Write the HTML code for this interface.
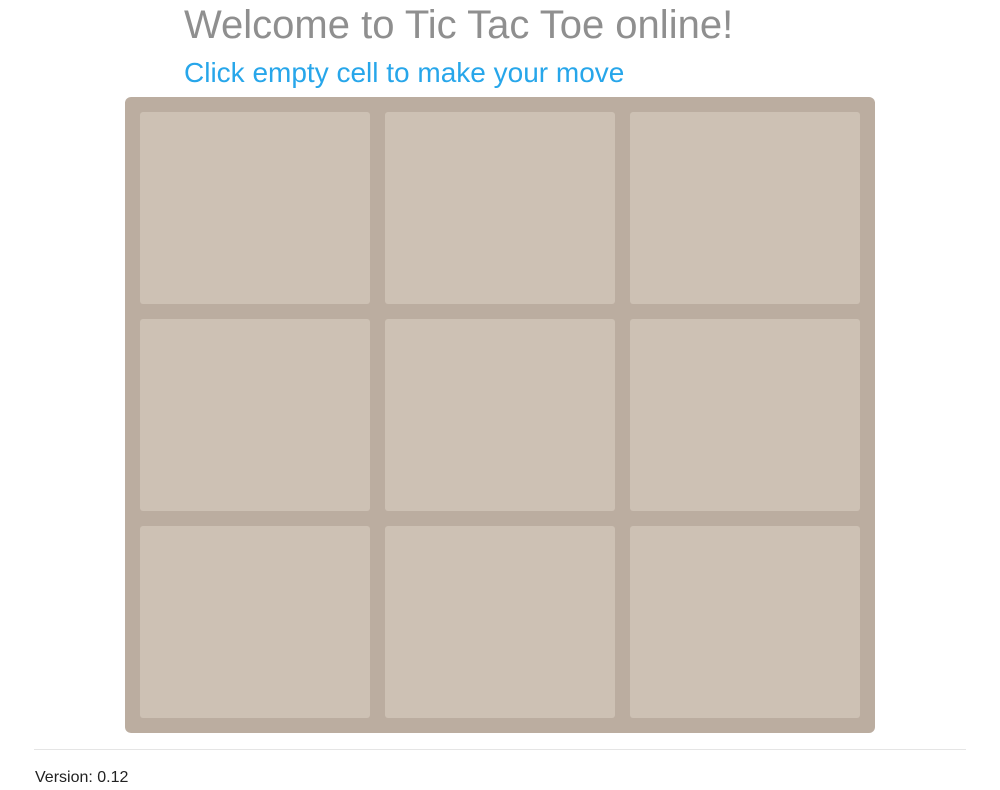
<!DOCTYPE html>
<html><head><style>
body{margin:0;background:#fff;font-family:"Liberation Sans",Arial,sans-serif;width:1000px;height:790px;overflow:hidden;position:relative}
.t{position:absolute;left:184px;top:3px;font-size:40px;color:#8f8f8f;white-space:nowrap}
.s{position:absolute;left:184px;top:57px;font-size:28px;color:#27a6ea;white-space:nowrap}
.b{position:absolute;left:125px;top:97px;width:750px;height:636px;background:#bbada0;border-radius:6px}
.c{position:absolute;width:230px;height:192px;background:#cdc1b4;border-radius:3px}
hr{position:absolute;left:34px;top:749px;width:932px;margin:0;border:0;border-top:1px solid #e5e5e5}
.v{position:absolute;left:35px;top:769px;font-size:16px;color:#222}
</style></head><body>
<div class="t">Welcome to Tic Tac Toe online!</div>
<div class="s">Click empty cell to make your move</div>
<div class="b">
<div class="c" style="left:15px;top:15px"></div><div class="c" style="left:260px;top:15px"></div><div class="c" style="left:505px;top:15px"></div>
<div class="c" style="left:15px;top:222px"></div><div class="c" style="left:260px;top:222px"></div><div class="c" style="left:505px;top:222px"></div>
<div class="c" style="left:15px;top:429px"></div><div class="c" style="left:260px;top:429px"></div><div class="c" style="left:505px;top:429px"></div>
</div>
<hr>
<div class="v">Version: 0.12</div>
</body></html>
